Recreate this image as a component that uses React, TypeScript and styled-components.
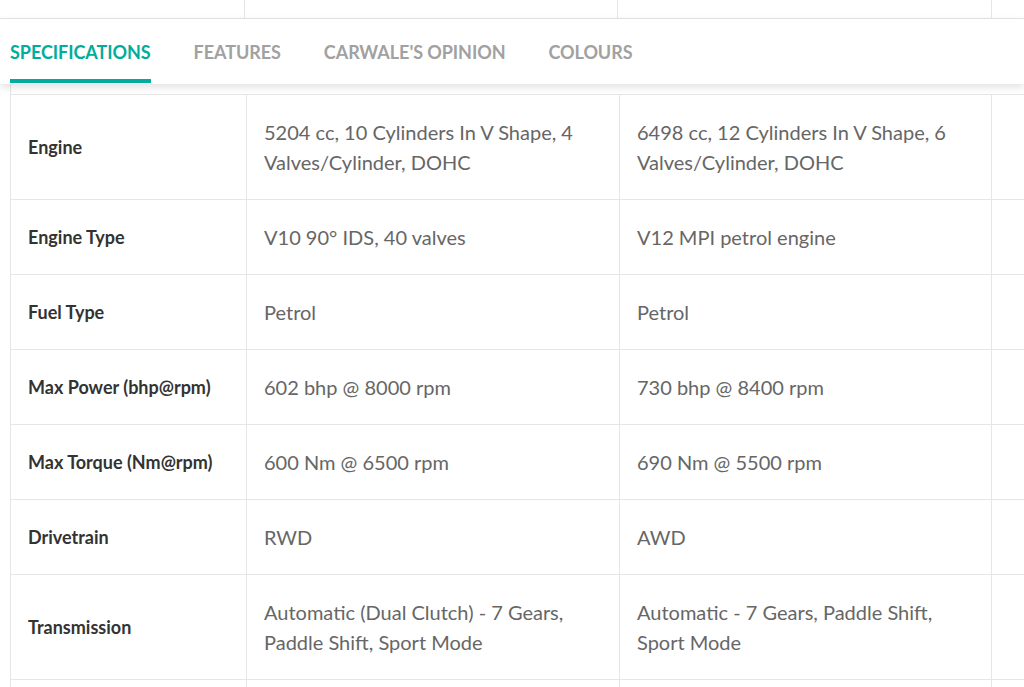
import React from "react";
import styled, { createGlobalStyle } from "styled-components";

const Global = createGlobalStyle`
  html, body { margin: 0; padding: 0; background: #fff; overflow: hidden; }
  body { font-family: Lato, "Open Sans", Arial, sans-serif; width: 1024px; height: 687px; }
`;

const Page = styled.div`
  width: 1024px;
  height: 687px;
  overflow: hidden;
  background: #fff;
`;

const TopStrip = styled.div`
  display: grid;
  grid-template-columns: 245px 373px 374px 1fr;
  height: 18px;
  border-bottom: 1px solid #e6e6e6;
`;

const TopCell = styled.div<{ $last?: boolean }>`
  border-right: ${(p) => (p.$last ? "none" : "1px solid #e6e6e6")};
`;

const TabBar = styled.nav`
  position: relative;
  z-index: 1;
  display: flex;
  gap: 43px;
  height: 65px;
  padding-left: 10px;
  background: #fff;
  box-shadow: 0 3px 8px rgba(0, 0, 0, 0.12);
`;

const Tab = styled.div<{ $active?: boolean }>`
  position: relative;
  display: flex;
  align-items: center;
  font-size: 18px;
  font-weight: 700;
  letter-spacing: -0.06px;
  color: ${(p) => (p.$active ? "#00ad9c" : "#a1a1a1")};
  &::after {
    content: "";
    display: ${(p) => (p.$active ? "block" : "none")};
    position: absolute;
    left: 0;
    right: 0;
    bottom: 1px;
    height: 4px;
    background: #00ad9c;
  }
`;

const Spacer = styled.div`
  height: 10px;
  border-left: 1px solid #e6e6e6;
  margin-left: 10px;
`;

const Table = styled.table`
  margin-left: 10px;
  width: 1181px;
  border-collapse: collapse;
  table-layout: fixed;
`;

const Col = styled.col<{ $w: number }>`
  width: ${(p) => p.$w}px;
`;

const Row = styled.tr``;

const Label = styled.th`
  padding: 22px 17px;
  border: 1px solid #e6e6e6;
  text-align: left;
  vertical-align: middle;
  font-size: 18px;
  line-height: 30px;
  font-weight: 700;
  color: #333;
`;

const Value = styled.td`
  padding: 22px 17px;
  border: 1px solid #e6e6e6;
  vertical-align: middle;
  font-size: 20px;
  line-height: 30px;
  color: #666;
`;

const rows: [string, string, string][] = [
  ["Engine", "5204 cc, 10 Cylinders In V Shape, 4 Valves/Cylinder, DOHC", "6498 cc, 12 Cylinders In V Shape, 6 Valves/Cylinder, DOHC"],
  ["Engine Type", "V10 90° IDS, 40 valves", "V12 MPI petrol engine"],
  ["Fuel Type", "Petrol", "Petrol"],
  ["Max Power (bhp@rpm)", "602 bhp @ 8000 rpm", "730 bhp @ 8400 rpm"],
  ["Max Torque (Nm@rpm)", "600 Nm @ 6500 rpm", "690 Nm @ 5500 rpm"],
  ["Drivetrain", "RWD", "AWD"],
  ["Transmission", "Automatic (Dual Clutch) - 7 Gears, Paddle Shift, Sport Mode", "Automatic - 7 Gears, Paddle Shift, Sport Mode"],
];

export default function App() {
  return (
    <Page>
      <Global />
      <TopStrip>
        <TopCell />
        <TopCell />
        <TopCell />
        <TopCell $last />
      </TopStrip>
      <TabBar>
        <Tab $active>SPECIFICATIONS</Tab>
        <Tab>FEATURES</Tab>
        <Tab>CARWALE'S OPINION</Tab>
        <Tab>COLOURS</Tab>
      </TabBar>
      <Spacer />
      <Table>
        <colgroup>
          <Col $w={236} />
          <Col $w={373} />
          <Col $w={372} />
          <Col $w={200} />
        </colgroup>
        <tbody>
          {rows.map(([l, a, b]) => (
            <Row key={l}>
              <Label>{l}</Label>
              <Value>{a}</Value>
              <Value>{b}</Value>
              <Value />
            </Row>
          ))}
          <Row>
            <Label>&nbsp;</Label>
            <Value />
            <Value />
            <Value />
          </Row>
        </tbody>
      </Table>
    </Page>
  );
}
